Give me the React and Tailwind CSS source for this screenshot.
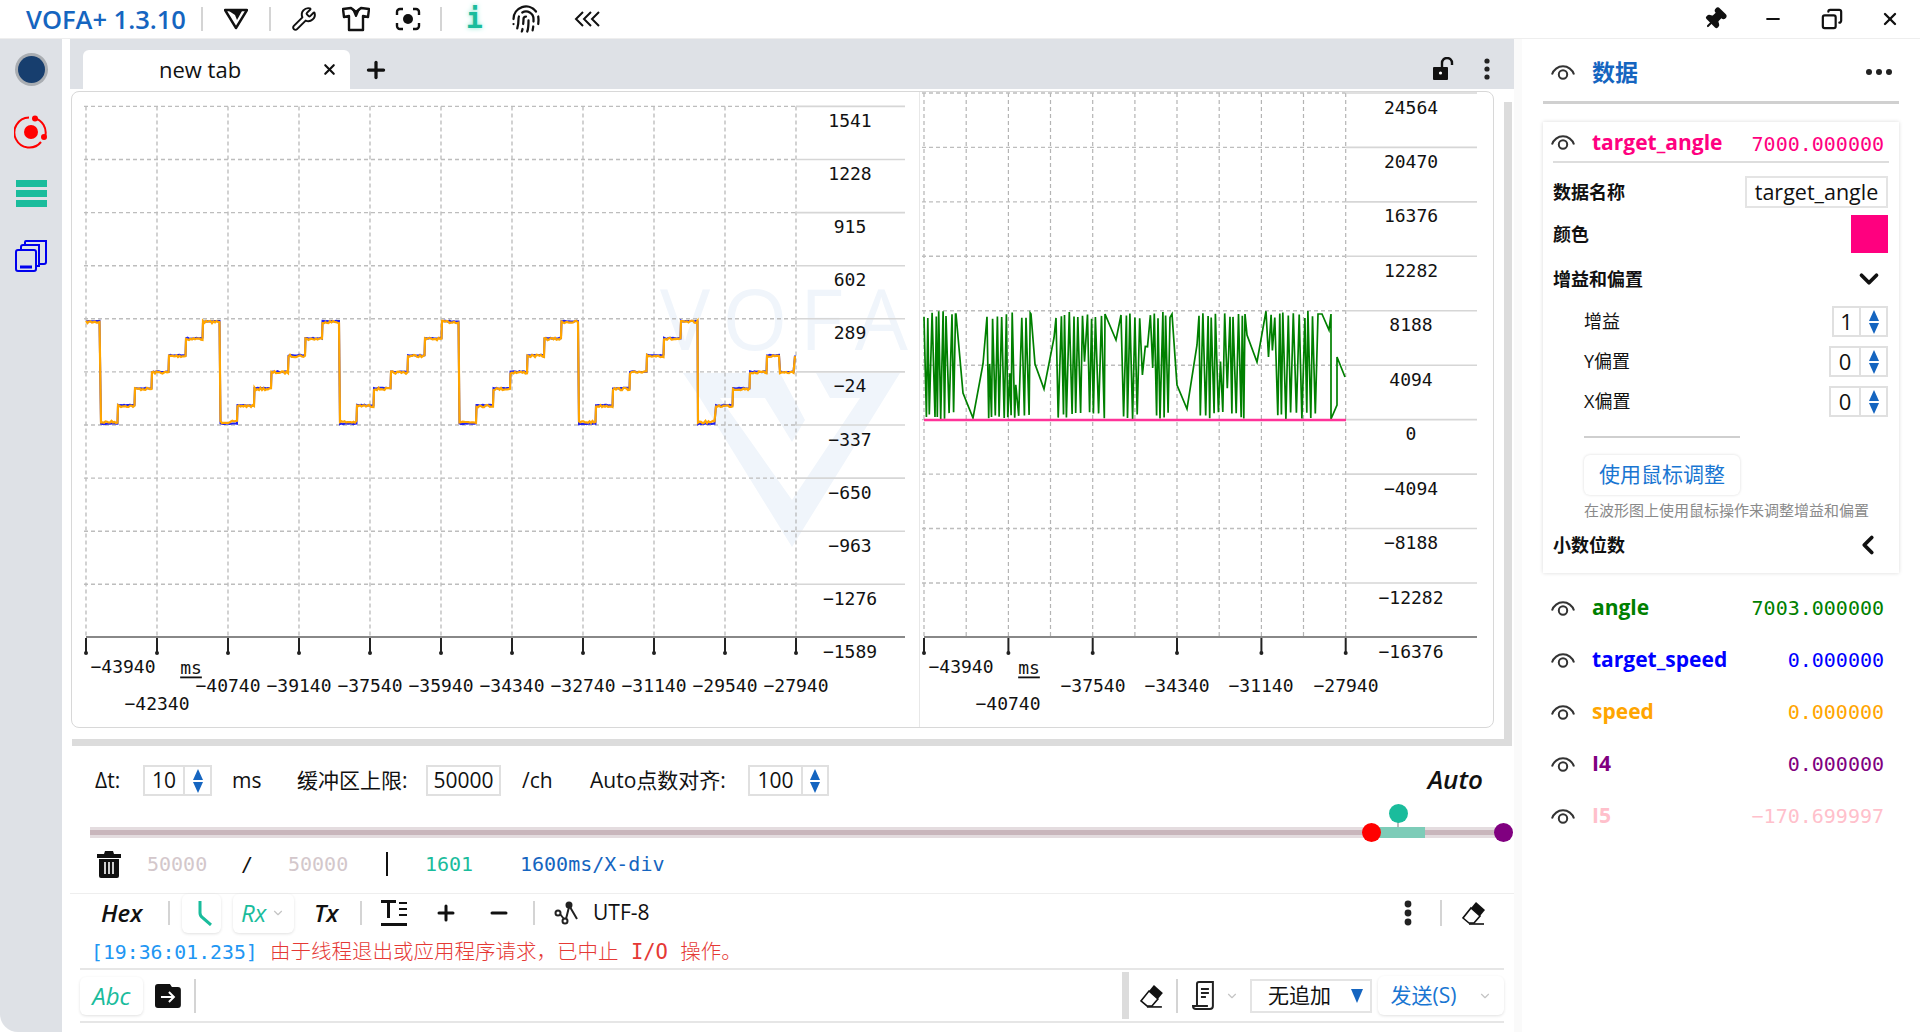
// App.jsx
import React from "react";
import { Wrench, Fingerprint, Pin, Plus, Minus, X, ChevronDown, ChevronLeft, Copy } from "lucide-react";

const MONO = "font-['DejaVu_Sans_Mono','Noto_Sans_CJK_SC',monospace]";

let seed = 7;
const rnd = () => {
  seed = (seed * 16807) % 2147483647;
  return seed / 2147483647;
};

// stepped trace of chart 1
function stepsLeft() {
  const out = [[86, 101, 322]];
  [101, 220.5, 340, 459.5, 579].forEach((d) => {
    [422, 406, 389, 372.5, 356, 339].forEach((y, i) => out.push([d + i * 17, d + (i + 1) * 17, y]));
    out.push([d + 102, d + 119.5, 322]);
  });
  out.push([698, 716, 422], [716, 733, 406], [733, 750, 389], [750, 767, 372.5], [767, 780, 356], [780, 795, 372.5], [795, 796, 356]);
  return out;
}

function tracePath(noise, dy) {
  let d = "";
  stepsLeft().forEach(([a, b, y]) => {
    for (let x = a; x < b; x += 1.5) {
      const yy = y + dy(y) + (rnd() - 0.5) * noise;
      d += (d ? "L" : "M") + x.toFixed(1) + " " + yy.toFixed(1);
    }
  });
  return d;
}

function greenPath() {
  const bursts = [
    [924, 956],
    [987, 1031],
    [1056, 1105],
    [1121, 1172],
    [1199, 1245],
    [1266, 1318],
  ];
  const joins = [
    [[963, 393], [973, 418], [983, 364]],
    [[1035, 364], [1044, 389], [1054, 338]],
    [[1116, 340]],
    [[1177, 385], [1187, 409], [1197, 345]],
    [[1247, 335], [1257, 362]],
    [[1322, 314], [1329, 330], [1331, 314], [1331, 419], [1337, 405], [1337, 357], [1345, 377]],
  ];
  const pts = [];
  bursts.forEach(([a, b], n) => {
    let up = true;
    for (let x = a; x <= b; x += 1 + rnd() * 2.2) {
      const y = up ? 311 + rnd() * 8 : 412 + rnd() * 7;
      pts.push([x, rnd() < 0.07 ? 340 + rnd() * 50 : y]);
      up = !up;
    }
    pts.push([b, 314]);
    joins[n].forEach((p) => pts.push(p));
  });
  return "M" + pts.map((p) => p[0].toFixed(1) + " " + p[1].toFixed(1)).join("L");
}

const ORANGE_D = tracePath(2.4, () => 0);
const BLUE_D = tracePath(1, (y) => (y === 422 ? 1.8 : -0.8));
const GREEN_D = greenPath();

function Tick({ x }) {
  return (
    <g>
      <line x1={x} x2={x} y1={638} y2={652} stroke="#222" strokeWidth="2" />
      <circle cx={x} cy={653} r="2" fill="#222" />
    </g>
  );
}

function Chart({ box, xs, ys, right, ticks, yLabels, labelX, xLabels, msX, back, children }) {
  const top = ys[0];
  const last = xs[xs.length - 1];
  return (
    <svg viewBox={box.join(" ")} width={box[2]} height={box[3]} className={MONO + " text-[18px] shrink-0"}>
      {back}
      {xs.map((x) => (
        <line key={x} x1={x} x2={x} y1={top} y2={637} stroke="#b4b4b4" strokeWidth="1.2" strokeDasharray="4 3" />
      ))}
      {ys.map((y, i) => (
        <g key={y}>
          <line x1={xs[0] - 2} x2={last} y1={y} y2={y} stroke="#bdbdbd" strokeWidth="1.4" strokeDasharray="4 3" />
          <line x1={last} x2={right} y1={y} y2={y} stroke="#d6d6d6" strokeWidth="1.6" />
          <text x={labelX} y={y + 14} textAnchor="middle" dominantBaseline="central" fill="#111">
            {yLabels[i]}
          </text>
        </g>
      ))}
      <line x1={xs[0]} x2={right} y1={637} y2={637} stroke="#888" strokeWidth="2" />
      <text x={labelX} y={651} textAnchor="middle" dominantBaseline="central" fill="#111">
        {yLabels[yLabels.length - 1]}
      </text>
      {ticks.map((x) => (
        <Tick key={x} x={x} />
      ))}
      {xLabels.map(([t, x, y]) => (
        <text key={t} x={x} y={y} textAnchor="middle" dominantBaseline="central" fill="#111">
          {t}
        </text>
      ))}
      <text x={msX} y={667} textAnchor="middle" dominantBaseline="central" fill="#111" textDecoration="underline">
        ms
      </text>
      {children}
    </svg>
  );
}

function Eye() {
  return (
    <svg width="26" height="20" viewBox="0 0 26 20" fill="none" stroke="#333" strokeWidth="2" className="shrink-0">
      <path d="M2 12.5a11.5 11.5 0 0 1 22 0" />
      <circle cx="13" cy="12.5" r="4.2" />
    </svg>
  );
}

function Spinner({ value, width, split, size = "text-[21px]" }) {
  return (
    <div className={"flex items-stretch border-2 border-[#e0e0e0] h-[31px] " + width}>
      <div className={"flex items-center justify-center " + split + " " + size}>{value}</div>
      <div className="flex flex-1 flex-col items-center justify-center gap-[2px] border-l-2 border-[#e0e0e0]">
        <svg width="10" height="11" viewBox="0 0 10 11"><path d="M5 0l5 11H0z" fill="#1565c0" /></svg>
        <svg width="10" height="11" viewBox="0 0 10 11"><path d="M5 11L0 0h10z" fill="#1565c0" /></svg>
      </div>
    </div>
  );
}

function Eraser({ className }) {
  return (
    <svg width="26" height="26" viewBox="0 0 26 26" className={className}>
      <path d="M15 2l9 8-5 6-9-8z" fill="#111" />
      <path d="M10 8l9 8-6 7H8l-6-5z" fill="#fff" stroke="#111" strokeWidth="1.6" />
      <path d="M8 24h15" stroke="#111" strokeWidth="1.6" />
    </svg>
  );
}

function Sep({ className = "" }) {
  return <div className={"w-[2px] bg-[#d4d4d4] " + className} />;
}

function DataRow({ name, value, color }) {
  return (
    <div className="flex items-center h-[52px] pl-[28px] pr-[36px]">
      <Eye />
      <span className={"ml-[16px] text-[21px] font-bold " + color}>{name}</span>
      <span className={"ml-auto text-[20px] " + MONO + " " + color}>{value}</span>
    </div>
  );
}

const LEFT_XS = [86, 157, 228, 299, 370, 441, 512, 583, 654, 725, 796];
const LEFT_YS = [106.4, 159.5, 212.6, 265.7, 318.8, 371.9, 425, 478.1, 531.2, 584.3];
const RIGHT_XS = [924, 966.2, 1008.4, 1050.5, 1092.7, 1134.9, 1177, 1219.2, 1261.4, 1303.5, 1345.7];
const RIGHT_YS = [93, 147.4, 201.9, 256.3, 310.8, 365.2, 419.6, 474.1, 528.5, 583];

export default function App() {
  return (
    <div className="flex h-[1032px] w-[1920px] flex-col overflow-hidden bg-white text-[#111] font-['Open_Sans','Noto_Sans_CJK_SC',sans-serif]">
      {/* Title bar */}
      <div className="flex h-[39px] shrink-0 items-center border-b border-[#eeeeee]">
        <span className="ml-[26px] w-[160px] whitespace-nowrap text-[25.5px] font-semibold text-[#1565c0]">VOFA+ 1.3.10</span>
        <Sep className="ml-[15px] h-[24px]" />
        <svg width="24" height="22" viewBox="0 0 24 22" className="ml-[21px]">
          <path d="M1 2h22L12 20z" fill="none" stroke="#111" strokeWidth="2.4" strokeLinejoin="round" />
          <path d="M5 3l6 4 2 5 5-9z" fill="#111" />
        </svg>
        <Sep className="ml-[21px] h-[24px]" />
        <Wrench size={26} strokeWidth={1.8} className="ml-[20px]" />
        <svg width="28" height="26" viewBox="0 0 28 26" fill="none" stroke="#111" strokeWidth="2.4" strokeLinejoin="round" className="ml-[25px]">
          <path d="M9 2L14 6l5-4 8 1-1 8-5-1v14H7V10l-5 1-1-8z" />
          <path d="M11 3l3 7 3-7" strokeWidth="2" />
        </svg>
        <svg width="26" height="24" viewBox="0 0 26 24" fill="none" stroke="#111" strokeWidth="2.4" className="ml-[25px]">
          <path d="M2 8V5a3 3 0 0 1 3-3h3M18 2h3a3 3 0 0 1 3 3v3M24 16v3a3 3 0 0 1-3 3h-3M8 22H5a3 3 0 0 1-3-3v-3" />
          <circle cx="13" cy="12" r="5" fill="#111" stroke="none" />
        </svg>
        <Sep className="ml-[19px] h-[24px]" />
        <span className={"ml-[24px] w-[16px] text-center text-[28px] font-bold leading-none text-[#1abc9c] [text-shadow:0_0_5px_#7fe3cd] " + MONO}>i</span>
        <Fingerprint size={30} strokeWidth={1.8} className="ml-[29px]" />
        <svg width="26" height="18" viewBox="0 0 26 18" fill="none" stroke="#111" strokeWidth="2" className="ml-[33px]">
          <path d="M9 2L2 9l7 7M17 2l-7 7 7 7M25 2l-7 7 7 7" />
        </svg>
        <Pin size={24} fill="#111" strokeWidth={2} className="ml-auto rotate-45" />
        <Minus size={20} strokeWidth={2.6} className="ml-[36px]" />
        <Copy size={22} strokeWidth={2.4} className="ml-[38px] -scale-x-100" />
        <X size={20} strokeWidth={2.8} className="ml-[37px] mr-[20px]" />
      </div>

      <div className="flex min-h-0 flex-1">
        {/* Left rail */}
        <div className="flex w-[62px] shrink-0 flex-col items-center rounded-bl-[18px] bg-[#dee1e6] pt-[14px]">
          <div className="flex h-[33px] w-[33px] items-center justify-center rounded-full bg-[#a9adb2]">
            <div className="h-[27px] w-[27px] rounded-full bg-[#173e6e]" />
          </div>
          <svg width="34" height="34" viewBox="0 0 34 34" fill="none" stroke="#ff0000" strokeWidth="2" className="mt-[29px]">
            <path d="M20 3a15 15 0 0 1 11 19M27 27A15 15 0 1 1 15 2.5" />
            <circle cx="21" cy="3.5" r="2" fill="#ff0000" />
            <circle cx="30" cy="22" r="2" fill="#ff0000" />
            <circle cx="17" cy="17" r="7" fill="#ff0000" stroke="none" />
          </svg>
          <div className="mt-[31px] flex w-[31px] flex-col gap-[3px]">
            <div className="h-[7px] bg-[#1abc9c]" />
            <div className="h-[7px] bg-[#1abc9c]" />
            <div className="h-[7px] bg-[#1abc9c]" />
          </div>
          <svg width="32" height="32" viewBox="0 0 32 32" fill="none" stroke="#0000ee" strokeWidth="2" className="mt-[33px]">
            <rect x="1" y="10" width="20" height="21" rx="2" />
            <path d="M6 10V7a2 2 0 0 1 2-2h16v21h-3M10 5V2a1 1 0 0 1 1-1h20v21a2 2 0 0 1-2 2h-5" />
            <path d="M5 27h12" strokeWidth="3" />
          </svg>
        </div>
        <div className="w-[8px] shrink-0" />

        {/* Center */}
        <div className="flex w-[1444px] shrink-0 flex-col">
          <div className="flex h-[50px] shrink-0 items-end bg-[#dee1e6]">
            <div className="ml-[13px] flex h-[39px] w-[267px] items-center rounded-t-[6px] bg-white">
              <span className="-mt-[2px] ml-[76px] text-[22px] leading-none">new tab</span>
              <X size={17} strokeWidth={3} className="ml-auto mr-[12px]" />
            </div>
            <Plus size={26} strokeWidth={3} className="mb-[6px] ml-[13px]" />
            <svg width="24" height="24" viewBox="0 0 24 24" className="mb-[8px] ml-auto">
              <rect x="1" y="10" width="15" height="13" rx="1" fill="#111" />
              <path d="M10 10V6a5 5 0 0 1 10 0v2" fill="none" stroke="#111" strokeWidth="2.4" />
              <circle cx="8.5" cy="16" r="1.6" fill="#fff" />
            </svg>
            <svg width="6" height="22" viewBox="0 0 6 22" className="mb-[9px] ml-[28px] mr-[24px]" fill="#222">
              <circle cx="3" cy="3" r="2.6" /><circle cx="3" cy="11" r="2.6" /><circle cx="3" cy="19" r="2.6" />
            </svg>
          </div>

          {/* Charts */}
          <div className="flex h-[650px] shrink-0">
            <div className="ml-[1px] mt-[2px] flex h-[637px] w-[1423px] shrink-0 rounded-[8px] border border-[#d8d8d8]">
              <Chart
                box={[72, 92, 847, 635]}
                xs={LEFT_XS}
                ys={LEFT_YS}
                right={905}
                ticks={LEFT_XS}
                labelX={850}
                msX={191}
                yLabels={["1541", "1228", "915", "602", "289", "−24", "−337", "−650", "−963", "−1276", "−1589"]}
                xLabels={[
                  ["−43940", 123, 666], ["−42340", 157, 703], ["−40740", 228, 685], ["−39140", 299, 685],
                  ["−37540", 370, 685], ["−35940", 441, 685], ["−34340", 512, 685], ["−32740", 583, 685],
                  ["−31140", 654, 685], ["−29540", 725, 685], ["−27940", 796, 685],
                ]}
                back={
                  <g fill="#f0f5fb">
                    <text x="790" y="350" textAnchor="middle" className="font-['Open_Sans',sans-serif] text-[84px]" letterSpacing="12">VOFA</text>
                    <path d="M683 373H780L805 420 792 442 765 398H700z" />
                    <path d="M700 398L792 547 900 373H816L830 398H860L792 500 720 398z" />
                  </g>
                }
              >
                <path d={BLUE_D} fill="none" stroke="#2222ee" strokeWidth="2" />
                <path d={ORANGE_D} fill="none" stroke="#ffa500" strokeWidth="2.2" />
              </Chart>
              <div className="mt-[0px] w-[1px] bg-[#e8e8e8]" />
              <Chart
                box={[920, 92, 572, 635]}
                xs={RIGHT_XS}
                ys={RIGHT_YS}
                right={1477}
                ticks={[924, 1008.4, 1092.7, 1177, 1261.4, 1345.7]}
                labelX={1411}
                msX={1029}
                yLabels={["24564", "20470", "16376", "12282", "8188", "4094", "0", "−4094", "−8188", "−12282", "−16376"]}
                xLabels={[
                  ["−43940", 961, 666], ["−40740", 1008, 703], ["−37540", 1093, 685],
                  ["−34340", 1177, 685], ["−31140", 1261, 685], ["−27940", 1346, 685],
                ]}
              >
                <path d={GREEN_D} fill="none" stroke="#008000" strokeWidth="1.7" />
                <line x1="924" x2="1346" y1="420" y2="420" stroke="#ff3399" strokeWidth="2.4" />
              </Chart>
            </div>
            <div className="ml-[10px] mt-[13px] h-[637px] w-[8px] bg-[#dcdcdc]" />
          </div>
          <div className="ml-[2px] h-[7px] w-[1440px] shrink-0 bg-[#dcdcdc]" />

          {/* Controls */}
          <div className="h-[147px] shrink-0">
            <div className="ml-[25px] mt-[19px] flex h-[31px] items-center text-[21px]">
              <span className="w-[48px]">Δt:</span>
              <Spinner value="10" width="w-[69px]" split="w-[38px]" />
              <span className="ml-[20px] w-[65px]">ms</span>
              <span className="w-[129px] whitespace-nowrap">缓冲区上限:</span>
              <div className="flex h-[31px] w-[75px] items-center justify-center border-2 border-[#e0e0e0]">50000</div>
              <span className="ml-[21px] w-[68px]">/ch</span>
              <span className="w-[158px] whitespace-nowrap">Auto点数对齐:</span>
              <Spinner value="100" width="w-[81px]" split="w-[51px]" />
              <span className="-mt-[2px] ml-auto mr-[31px] text-[26px] font-semibold italic">Auto</span>
            </div>
            <div className="relative ml-[20px] mt-[31px] h-[11px] w-[1414px] bg-[#e4dcdf]">
              <div className="mt-[0px] h-[11px] border-y-[3px] border-[#e4dcdf] bg-[#c9b6bc]" />
              <div className="absolute left-[1281px] top-0 h-[11px] w-[54px] bg-[#7dccb8]" />
              <div className="absolute left-[1307px] top-[-8px] h-[8px] w-[2px] bg-[#bbbbbb]" />
              <div className="absolute left-[1272px] top-[-4px] h-[19px] w-[19px] rounded-full bg-[#ff0000]" />
              <div className="absolute left-[1299px] top-[-23px] h-[19px] w-[19px] rounded-full bg-[#1abc9c]" />
              <div className="absolute left-[1404px] top-[-4px] h-[19px] w-[19px] rounded-full bg-[#800080]" />
            </div>
            <div className={"ml-[27px] mt-[12px] flex h-[28px] items-center text-[20px] " + MONO}>
              <svg width="24" height="27" viewBox="0 0 24 27" className="shrink-0">
                <path d="M8 0h8l1 3h7v4H0V3h7z" fill="#111" />
                <path d="M2 8h20v17a2 2 0 0 1-2 2H4a2 2 0 0 1-2-2z" fill="#111" />
                <path d="M8 11v12M12 11v12M16 11v12" stroke="#fff" strokeWidth="1.6" />
              </svg>
              <span className="ml-[26px] w-[94px] text-[#d3c7cb]">50000</span>
              <span className="w-[47px]">/</span>
              <span className="w-[98px] text-[#d3c7cb]">50000</span>
              <div className="h-[24px] w-[2px] bg-[#111]" />
              <span className="ml-[37px] w-[95px] text-[#1abc9c]">1601</span>
              <span className="text-[#1565c0]">1600ms/X-div</span>
            </div>
          </div>

          {/* Toolbar */}
          <div className="flex h-[39px] shrink-0 items-center border-t border-[#eeeeee] text-[20px]">
            <span className="ml-[31px] w-[67px] text-[24px] font-semibold italic">Hex</span>
            <Sep className="h-[24px]" />
            <div className="ml-[12px] flex h-[39px] w-[39px] items-center justify-center rounded-[6px] shadow-[0_1px_3px_#0000001f]">
              <svg width="16" height="26" viewBox="0 0 16 26" fill="none" stroke="#1abc9c" strokeWidth="3" className="ml-[6px]"><path d="M3 1v12q0 3 3 5l8 7" /></svg>
            </div>
            <div className="ml-[12px] flex h-[39px] w-[61px] items-center rounded-[6px] pl-[8px] shadow-[0_1px_3px_#0000001f]">
              <span className="text-[24px] font-medium italic text-[#1abc9c]">Rx</span>
              <ChevronDown size={14} className="ml-[5px] text-[#c4c4c4]" />
            </div>
            <span className="ml-[20px] w-[46px] text-[24px] font-semibold italic">Tx</span>
            <Sep className="h-[24px]" />
            <svg width="26" height="26" viewBox="0 0 26 26" className="ml-[19px]" fill="#111">
              <path d="M0 0h15v3h-6v15H6V3H0zM18 2h8v2h-8zM18 8h8v2h-8zM18 14h8v2h-8zM0 23h26v3H0z" />
            </svg>
            <Plus size={24} strokeWidth={3} className="ml-[27px]" />
            <Minus size={24} strokeWidth={3} className="ml-[29px]" />
            <Sep className="ml-[22px] h-[24px]" />
            <svg width="26" height="24" viewBox="0 0 26 24" fill="none" stroke="#222" strokeWidth="2" className="ml-[19px]">
              <circle cx="4" cy="12" r="2.5" /><circle cx="15" cy="4" r="2.5" fill="#222" /><circle cx="11" cy="20" r="2.5" /><path d="M6 13l4 5M12 18l3-12M16 6l7 12" />
            </svg>
            <span className="ml-[13px] text-[21px]">UTF-8</span>
            <svg width="8" height="26" viewBox="0 0 8 26" className="ml-auto" fill="#222">
              <circle cx="4" cy="4" r="3.4" /><circle cx="4" cy="13" r="3.4" /><circle cx="4" cy="22" r="3.4" />
            </svg>
            <Sep className="ml-[28px] h-[26px]" />
            <Eraser className="ml-[19px] mr-[27px]" />
          </div>

          {/* Log line */}
          <div className={"ml-[10px] flex h-[38px] w-[1424px] shrink-0 items-center border-b-2 border-[#e6e6e6] pl-[11px] pt-[5px] text-[19.8px] whitespace-pre " + MONO}>
            <span className="text-[#2196f3]">[19:36:01.235]</span>
            <span className="text-[20.5px] font-light text-[#e53935]"> {"由于线程退出或应用程序请求\uFF0C已中止 I/O 操作。"}</span>
          </div>

          {/* Send row */}
          <div className="ml-[10px] flex h-[53px] w-[1424px] shrink-0 items-center border-b-2 border-[#e6e6e6] text-[21px]">
            <div className="flex h-[38px] w-[63px] items-center justify-center rounded-[6px] text-[24px] font-medium italic text-[#1abc9c] shadow-[0_1px_3px_#0000001f]">Abc</div>
            <svg width="26" height="24" viewBox="0 0 26 24" className="ml-[12px]">
              <path d="M3 0h12l2 3h6a3 3 0 0 1 3 3v15a3 3 0 0 1-3 3H3a3 3 0 0 1-3-3V3a3 3 0 0 1 3-3z" fill="#111" />
              <path d="M6 13h13M14 8l5 5-5 5" fill="none" stroke="#fff" strokeWidth="2" />
            </svg>
            <Sep className="ml-[13px] h-[34px]" />
            <div className="ml-[926px] h-[47px] w-[8px] bg-[#dcdcdc]" />
            <Eraser className="ml-[10px]" />
            <Sep className="ml-[11px] h-[34px]" />
            <svg width="24" height="30" viewBox="0 0 24 30" fill="none" stroke="#222" strokeWidth="2" className="ml-[14px]">
              <path d="M5 25V3a2 2 0 0 1 2-2h14v24a3 3 0 0 1-3 3H4a3 3 0 0 1-3-3h15" />
              <path d="M9 8h8M9 12h8M9 16h5" />
            </svg>
            <ChevronDown size={14} className="ml-[9px] text-[#c4c4c4]" />
            <div className="ml-[11px] flex h-[34px] w-[122px] items-center border-2 border-[#e4e4e4] pl-[16px]">
              <span>无追加</span>
              <svg width="12" height="14" viewBox="0 0 12 14" className="ml-auto mr-[7px]"><path d="M0 0h12L6 14z" fill="#1565c0" /></svg>
            </div>
            <div className="ml-[6px] flex h-[39px] w-[127px] items-center rounded-[6px] pl-[13px] text-[#1976d2] shadow-[0_1px_3px_#0000001f]">
              <span>发送(S)</span>
              <ChevronDown size={14} className="ml-auto mr-[12px] text-[#c4c4c4]" />
            </div>
          </div>
        </div>
        <div className="w-[8px] shrink-0 bg-[#fafafa]" />

        {/* Data panel */}
        <div className="flex w-[398px] shrink-0 flex-col">
          <div className="mx-[21px] flex h-[65px] shrink-0 items-center border-b-[3px] border-[#d0d0d0] px-[7px] pt-[4px]">
            <Eye />
            <span className="ml-[16px] text-[23px] font-bold text-[#1565c0]">数据</span>
            <svg width="26" height="6" viewBox="0 0 26 6" className="ml-auto" fill="#222">
              <circle cx="3" cy="3" r="3" /><circle cx="13" cy="3" r="3" /><circle cx="23" cy="3" r="3" />
            </svg>
          </div>

          <div className="ml-[21px] mt-[18px] h-[451px] w-[356px] shrink-0 shadow-[0_0_4px_#00000026]">
            <div className="mx-[10px] flex h-[41px] items-center border-b-2 border-[#dddddd] pr-[5px]">
              <div className="-ml-[3px]"><Eye /></div>
              <span className="ml-[16px] mt-[3px] text-[21px] font-bold text-[#ff0080]">target_angle</span>
              <span className={"ml-auto mt-[4px] text-[20px] text-[#ff0080] " + MONO}>7000.000000</span>
            </div>
            <div className="mt-[13px] flex h-[32px] items-center pl-[10px] pr-[11px]">
              <span className="text-[18px] font-bold">数据名称</span>
              <div className="ml-auto flex h-[32px] w-[143px] items-center justify-center border-2 border-[#e4e4e4] text-[21.5px]">target_angle</div>
            </div>
            <div className="mt-[7px] flex h-[38px] items-center pl-[10px] pr-[11px]">
              <span className="text-[18px] font-bold">颜色</span>
              <div className="ml-auto h-[38px] w-[37px] bg-[#ff007f]" />
            </div>
            <div className="mt-[7px] flex h-[38px] items-center pl-[10px] pr-[15px]">
              <span className="text-[18px] font-bold">增益和偏置</span>
              <ChevronDown size={30} strokeWidth={3} className="ml-auto" />
            </div>
            <div className="mt-[8px] flex flex-col gap-[9px] pl-[41px] pr-[11px] text-[18px]">
              <div className="flex items-center">
                <span>增益</span>
                <div className="ml-auto"><Spinner value="1" width="w-[56px]" split="w-[25px]" size="text-[22px]" /></div>
              </div>
              <div className="flex items-center">
                <span>Y偏置</span>
                <div className="ml-auto"><Spinner value="0" width="w-[59px]" split="w-[28px]" size="text-[22px]" /></div>
              </div>
              <div className="flex items-center">
                <span>X偏置</span>
                <div className="ml-auto"><Spinner value="0" width="w-[59px]" split="w-[28px]" size="text-[22px]" /></div>
              </div>
            </div>
            <div className="ml-[41px] mt-[19px] h-[2px] w-[156px] bg-[#cfcfcf]" />
            <div className="ml-[41px] mt-[17px] flex h-[40px] w-[156px] items-center justify-center rounded-[6px] text-[21px] text-[#1976d2] shadow-[0_0_3px_#00000026]">使用鼠标调整</div>
            <div className="ml-[41px] mt-[4px] whitespace-nowrap text-[15px] leading-[22px] text-[#8a8a8a]">在波形图上使用鼠标操作来调整增益和偏置</div>
            <div className="mt-[6px] flex h-[36px] items-center pl-[10px] pr-[16px]">
              <span className="text-[18px] font-bold">小数位数</span>
              <ChevronLeft size={30} strokeWidth={3} className="ml-auto" />
            </div>
          </div>

          <div className="mt-[9px]">
            <DataRow name="angle" value="7003.000000" color="text-[#008000]" />
            <DataRow name="target_speed" value="0.000000" color="text-[#0000ff]" />
            <DataRow name="speed" value="0.000000" color="text-[#ffa500]" />
            <DataRow name="I4" value="0.000000" color="text-[#800080]" />
            <DataRow name="I5" value="−170.699997" color="text-[#ffc0cb]" />
          </div>
        </div>
      </div>
    </div>
  );
}
